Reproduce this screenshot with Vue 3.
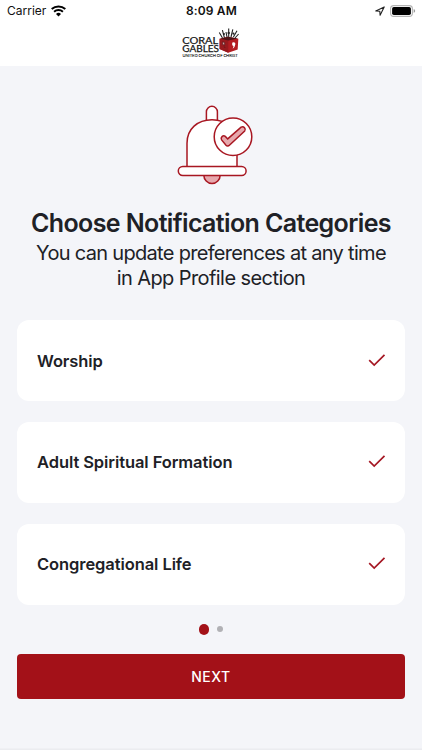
<script setup>
import { ref } from 'vue'

const categories = ref([
  { name: 'Worship', selected: true },
  { name: 'Adult Spiritual Formation', selected: true },
  { name: 'Congregational Life', selected: true },
])
</script>

<template>
  <div class="screen">
    <header class="header">
      <div class="status">
        <div class="status-left">
          <span class="carrier">Carrier</span>
          <svg class="wifi" width="15" height="12" viewBox="0 0 15 12">
            <path d="M.7 4.1a10 10 0 0 1 13.6 0" fill="none" stroke="#000" stroke-width="2" />
            <path d="M3.1 6.8a6.4 6.4 0 0 1 8.8 0" fill="none" stroke="#000" stroke-width="1.9" />
            <path d="M5 8.9a3.6 3.6 0 0 1 5 0L7.5 11.4z" fill="#000" />
          </svg>
        </div>
        <span class="time">8:09 AM</span>
        <div class="status-right">
          <svg width="10" height="10" viewBox="0 0 10 10">
            <path d="M9.2.9L.8 4.9l4 .3.3 4z" fill="none" stroke="#222" stroke-width="1.1" stroke-linejoin="round" />
          </svg>
          <svg class="battery" width="26" height="12" viewBox="0 0 26 12">
            <rect x=".6" y=".6" width="21.8" height="10.8" rx="3.1" fill="#fff" stroke="#b4b4b4" stroke-width="1.1" />
            <rect x="2.1" y="2.1" width="18.8" height="7.8" rx="1.7" />
            <path d="M23.7 4.1q1.5.7 1.5 1.9t-1.5 1.9z" fill="#999" />
          </svg>
        </div>
      </div>
      <svg class="logo" width="58" height="32" viewBox="0 0 58 32">
        <g class="logo-text" fill="#161616">
          <text x="0.2" y="17.7" font-size="9.8" textLength="36" lengthAdjust="spacingAndGlyphs">CORAL</text>
          <text x="0.2" y="26.1" font-size="9.8" textLength="36.8" lengthAdjust="spacingAndGlyphs">GABLES</text>
          <text class="logo-small" x="0.4" y="30.7" font-size="4.2" textLength="55.2" lengthAdjust="spacingAndGlyphs">UNITED CHURCH OF CHRIST</text>
        </g>
        <g fill="none" stroke="#222" stroke-width="1.1">
          <path d="M40.5 12l-3.2-5.6M42.5 12L40.4 4.2M45 11l-1-5M46.7 11V2.6M49 11l1.8-7.6M51.4 11l3.6-6.2M53 12l3.6-4" />
        </g>
        <g fill="#222"><circle cx="41.9" cy="8" r="1.1" /><circle cx="46.7" cy="7" r="1.2" /><circle cx="51.4" cy="7.6" r="1.1" /></g>
        <path d="M37.6 12.8l8.2-2 10.5 1.9-.6 10.7-9.5 3.4-8.6-3.8z" fill="#b51d22" />
        <path d="M37.6 12.8l8.7 1.7v12.3l-8.7-3.8z" fill="#981a1e" />
        <path d="M38 12.7l8-2 10 1.9-9.7 1.9z" fill="#4b1417" />
        <path d="M40.6 15.9l2 .5v2.7l-2-.6zM41.8 20.9l1.5.5" fill="#e5a3a5" stroke="#42191b" stroke-width=".6" />
        <path d="M50.4 16.4q3.2-.6 3 1.7-.2 2.7-2.7 4.6l.8-2.6q-2-.9-1.1-3.7z" fill="#fff" />
      </svg>
    </header>

    <main class="content">
      <svg class="bell" width="76" height="82" viewBox="0 0 76 82">
        <g fill="#fff" stroke="#a81722" stroke-width="1.5">
          <path d="M26.8 70a8.2 8.6 0 0 0 16.4 0z" fill="#e6a8ad" />
          <path d="M29.4 18V6.8a5.5 5.5 0 0 1 11 0V18" />
          <path d="M10 61.8V38.2C10 24 20.5 14.8 35 14.8S60 24 60 38.2v23.6z" />
          <rect x="1.3" y="61.5" width="67.8" height="9" rx="4.5" />
          <circle cx="56" cy="31.7" r="18.8" />
          <path d="M44.6 34.9a2.6 2.6 0 0 1 3.7-3.5l2.4 2.5L64.1 22.2a2.7 2.7 0 0 1 3.6 3.9L52.4 40.3a2.4 2.4 0 0 1-3.4-.1z" fill="#e6a8ad" />
        </g>
      </svg>
      <h1>Choose Notification Categories</h1>
      <p class="subtitle"><span class="line-one">You can update preferences at any time</span><br><span class="line-two">in App Profile section</span></p>

      <div class="cards">
        <button v-for="item in categories" :key="item.name" class="card" @click="item.selected = !item.selected">
          <span class="label">{{ item.name }}</span>
          <svg v-if="item.selected" width="18" height="14" viewBox="0 0 18 14">
            <path d="M1.2 6.1l5 4.9L16.5.8" fill="none" stroke="#a51824" stroke-width="1.7" />
          </svg>
        </button>
      </div>

      <div class="dots"><i class="dot active"></i><i class="dot"></i></div>
      <button class="next">NEXT</button>
    </main>
    <div class="bottom-edge"></div>
  </div>
</template>

<style>
body { background: #f4f5f9; }
</style>

<style scoped>
.screen {
  width: 422px;
  height: 750px;
  box-sizing: border-box;
  display: flex;
  flex-direction: column;
  overflow: hidden;
  background: #f4f5f9;
  color: #202126;
  font-family: Inter, "Liberation Sans", sans-serif;
}
.header {
  height: 66px;
  flex: none;
  background: #fff;
  display: flex;
  flex-direction: column;
  align-items: center;
}
.status {
  width: 100%;
  height: 22px;
  box-sizing: border-box;
  padding: 0 6px 0 7px;
  display: grid;
  grid-template-columns: 1fr auto 1fr;
  align-items: center;
  color: #111;
  font-size: 12px;
  line-height: 22px;
}
.status-left, .status-right { display: flex; align-items: center; }
.status-left { gap: 5px; }
.status-right { justify-content: flex-end; gap: 5px; }
.time { font-weight: 600; letter-spacing: .15px; }
.logo { margin-top: 4px; margin-right: 1px; }
.logo-text { font-family: Lato, sans-serif; font-weight: 400; stroke: #161616; stroke-width: .25px; }
.logo-small { stroke-width: .1px; }
.content {
  flex: 1;
  padding: 38.5px 16.8px 0;
  display: flex;
  flex-direction: column;
  align-items: center;
}
.bell { flex: none; margin-left: 8px; }
h1 {
  margin: 20.5px 0 0;
  font-size: 25px;
  font-weight: 600;
  line-height: 32px;
  letter-spacing: -.62px;
  white-space: nowrap;
}
.subtitle {
  margin: 2px 0 0;
  text-align: center;
  font-size: 20px;
  line-height: 24.5px;
  letter-spacing: -.69px;
  white-space: nowrap;
}
.line-two { letter-spacing: -.58px; }
.cards {
  width: 100%;
  margin-top: 30px;
  display: flex;
  flex-direction: column;
  gap: 20.5px;
}
.card {
  height: 81.3px;
  border: 0;
  border-radius: 12px;
  padding: 0 19.5px 0 20.2px;
  background: #fff;
  color: inherit;
  font: inherit;
  display: flex;
  align-items: center;
  justify-content: space-between;
}
.label { font-size: 16.5px; font-weight: 600; letter-spacing: -.08px; }
.dots {
  height: 12px;
  margin-top: 18.5px;
  display: flex;
  align-items: center;
  justify-content: center;
  gap: 8px;
}
.dot { width: 6px; height: 6px; border-radius: 50%; background: #b1b1b5; }
.dot.active { width: 10.5px; height: 10.5px; background: #a31118; }
.next {
  width: 100%;
  height: 45px;
  margin-top: 18.6px;
  border: 0;
  border-radius: 4px;
  background: #a31118;
  color: #fff;
  font-family: inherit;
  font-size: 14px;
  font-weight: 500;
  letter-spacing: .5px;
}
.bottom-edge { height: 2px; background: linear-gradient(#f1f2f6, #e9eaee); }
</style>
